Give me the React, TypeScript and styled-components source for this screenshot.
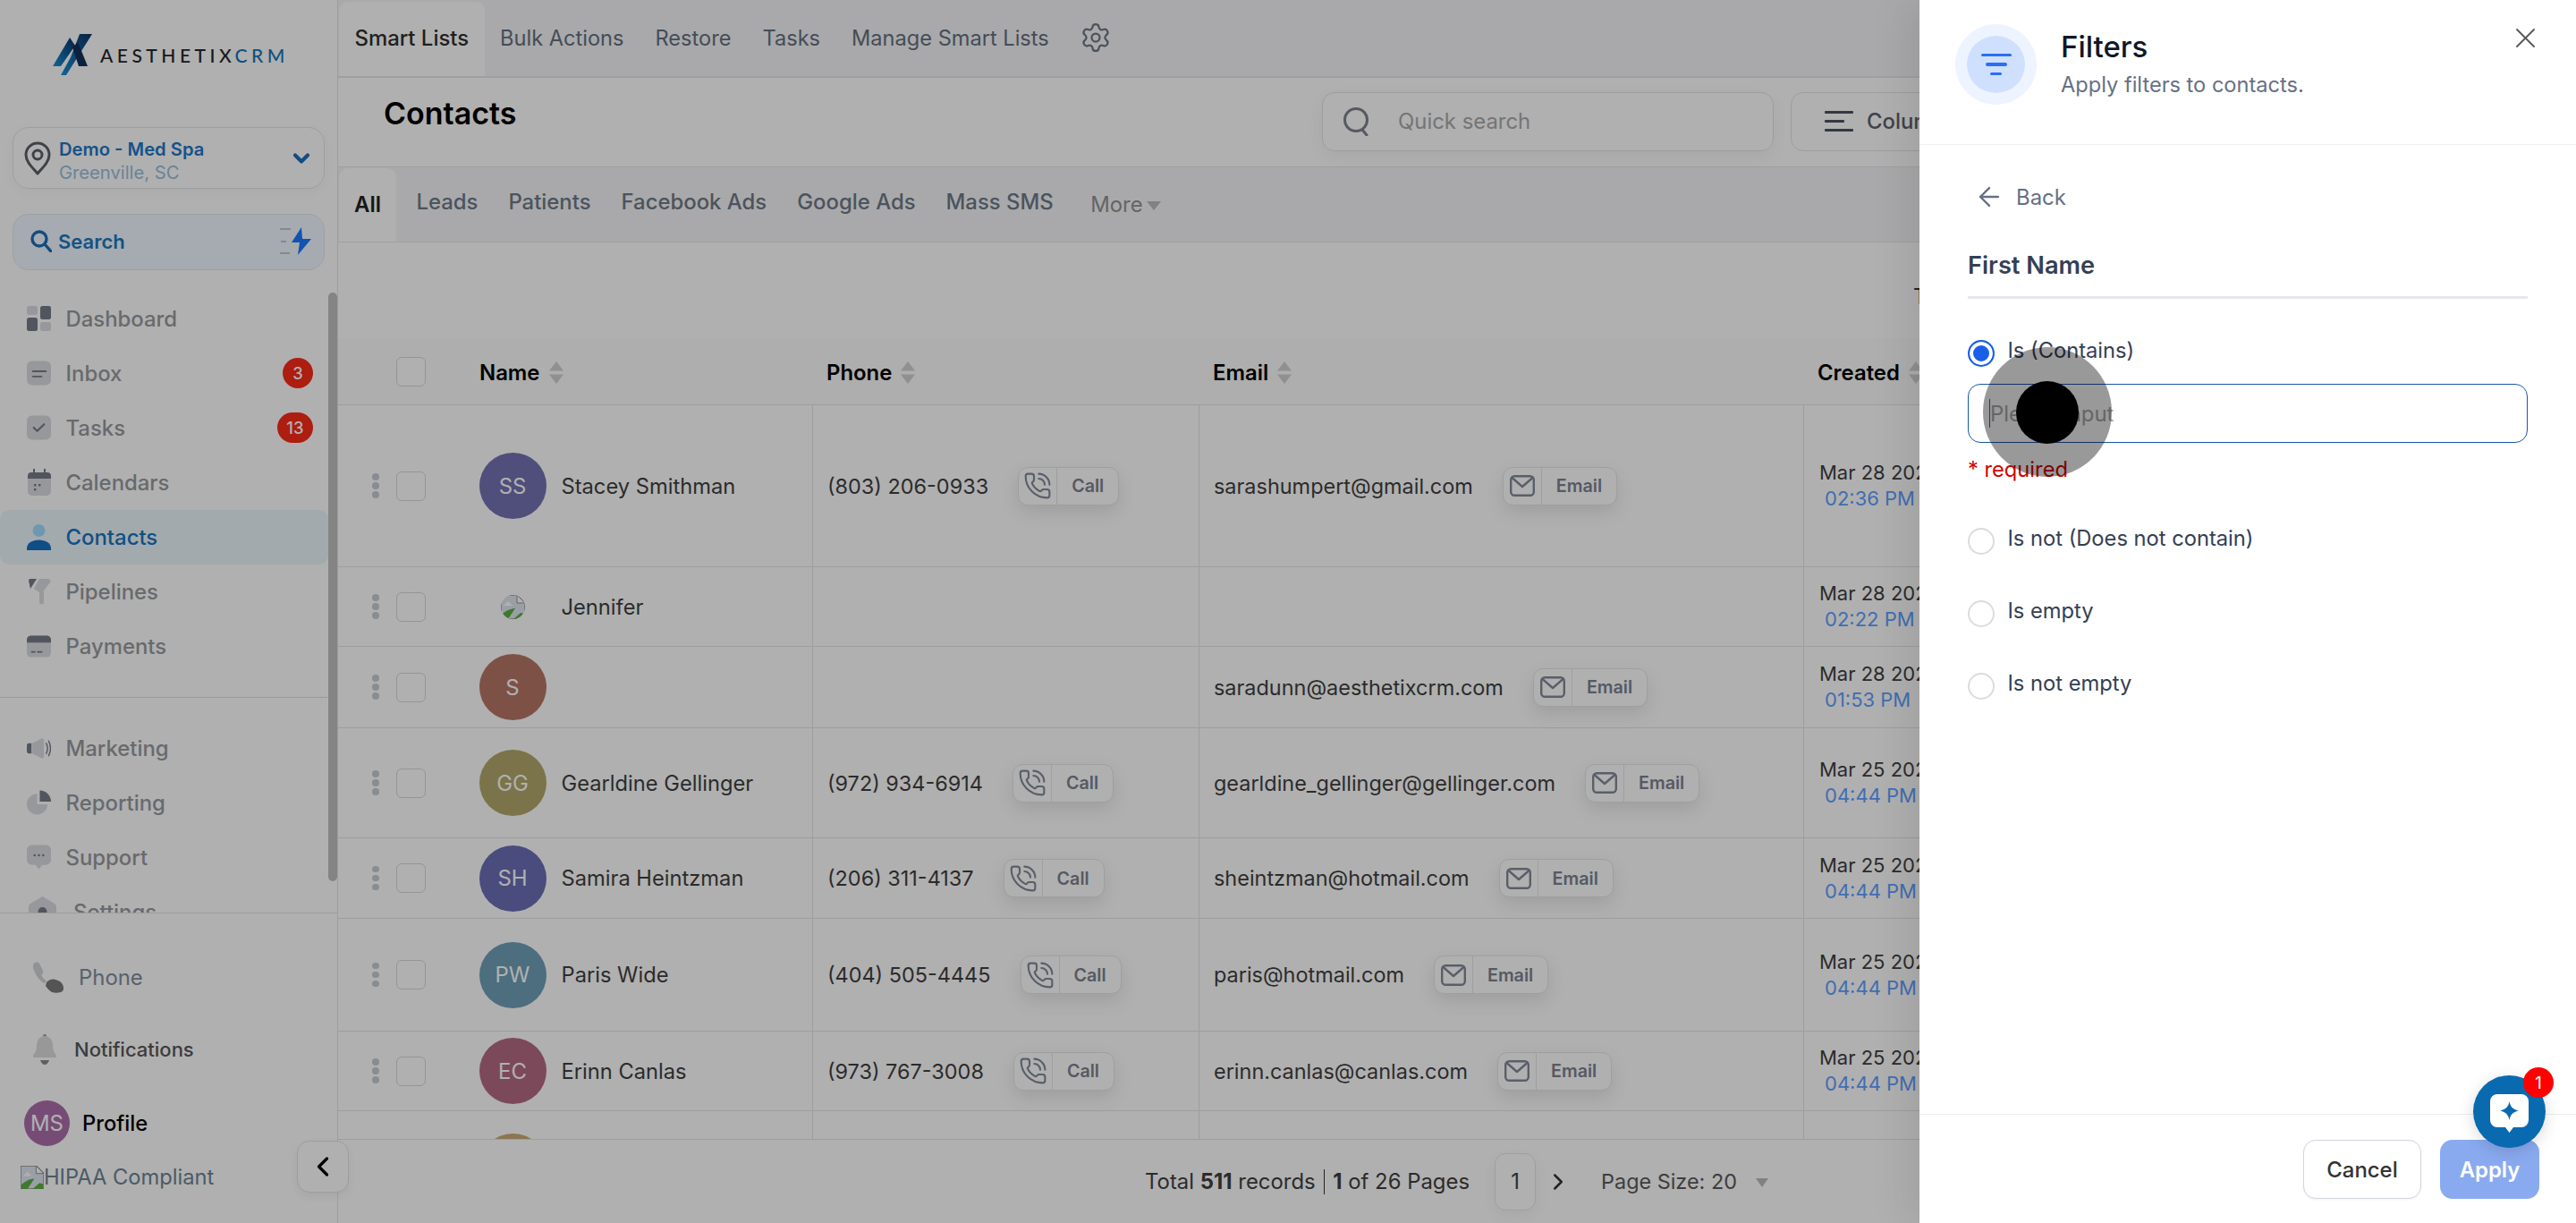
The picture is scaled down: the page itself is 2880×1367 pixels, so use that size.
import { ReactNode } from 'react';
import styled, { createGlobalStyle } from 'styled-components';
import { ArrowLeft, ChevronDown, ChevronLeft, ChevronRight, PhoneCall, Settings } from 'lucide-react';

const GlobalStyle = createGlobalStyle`
  html, body { margin: 0; padding: 0; background: #fff; }
  body { font-family: Inter, "Liberation Sans", sans-serif; font-size: 23.9px; color: #333; }
  * { box-sizing: border-box; }
`;

const DARK = '#747b88';
const LIGHT = '#d9dce2';

// ─── Drawn icons ──────────────────────────────────────────────────────────

function LogoMark() {
  return (
    <svg width="44" height="46" viewBox="0 0 44 46">
      <defs>
        <linearGradient id="logoFill" x1="0" y1="1" x2="1" y2="0">
          <stop offset="0" stopColor="#1f8fd8" />
          <stop offset="0.55" stopColor="#0f5c9a" />
          <stop offset="1" stopColor="#12305c" />
        </linearGradient>
      </defs>
      <polygon points="19,4 25,13 9,36 0,36" fill="url(#logoFill)" />
      <polygon points="30,0 44,0 15,46 9,46 20,26" fill="url(#logoFill)" />
      <polygon points="22,15 28,9 39,36 29,36" fill="#12305c" />
    </svg>
  );
}

function PinIcon() {
  return (
    <svg width="30" height="38" viewBox="0 0 30 38" fill="none" stroke="#5a6068" strokeWidth="3">
      <path d="M15 36C9 29 2 23 2 15a13 13 0 0 1 26 0c0 8-7 14-13 21z" strokeLinejoin="round" />
      <circle cx="15" cy="15" r="5" />
    </svg>
  );
}

function LightningIcon() {
  return (
    <svg width="36" height="32" viewBox="0 0 36 32">
      <g stroke="#8a96a3" strokeWidth="1">
        <line x1="0" y1="2" x2="12" y2="2" />
        <line x1="1" y1="16" x2="7" y2="16" />
        <line x1="0" y1="29" x2="11" y2="29" />
      </g>
      <path d="M24 0L13 17h9l-2 14L35 13h-10z" fill="#1b78ff" />
    </svg>
  );
}

function MagnifierIcon() {
  return (
    <svg width="24" height="25" viewBox="0 0 24 25" fill="none" stroke="#1e6fb8" strokeWidth="3.4">
      <circle cx="10" cy="10" r="8" />
      <line x1="16" y1="16" x2="23" y2="24" strokeLinecap="round" />
    </svg>
  );
}

const navIcons: Record<string, ReactNode> = {
  Dashboard: (
    <svg width="27" height="28" viewBox="0 0 27 28">
      <rect x="0" y="0" width="12" height="10" rx="2.5" fill={LIGHT} />
      <rect x="15" y="0" width="12" height="15" rx="2.5" fill={DARK} />
      <rect x="0" y="13" width="12" height="15" rx="2.5" fill={DARK} />
      <rect x="15" y="18" width="12" height="10" rx="2.5" fill={LIGHT} />
    </svg>
  ),
  Inbox: (
    <svg width="28" height="28" viewBox="0 0 28 28">
      <rect width="28" height="28" rx="6" fill={LIGHT} />
      <rect x="6" y="11" width="17" height="2" rx="1" fill={DARK} />
      <rect x="6" y="17" width="12" height="2" rx="1" fill={DARK} />
    </svg>
  ),
  Tasks: (
    <svg width="28" height="28" viewBox="0 0 28 28">
      <rect width="28" height="28" rx="6" fill={LIGHT} />
      <path d="M8 14l4 4 8-8" fill="none" stroke={DARK} strokeWidth="2.2" strokeLinecap="round" strokeLinejoin="round" />
    </svg>
  ),
  Calendars: (
    <svg width="26" height="30" viewBox="0 0 26 30">
      <rect x="0" y="8" width="26" height="22" rx="5" fill={LIGHT} />
      <path d="M0 11V8a4 4 0 0 1 4-4h2V0h2v4h10V0h2v4h2a4 4 0 0 1 4 4v3z" fill={DARK} />
      <g fill={DARK}>
        <rect x="7" y="17" width="2.4" height="2.4" />
        <rect x="12" y="17" width="2.4" height="2.4" />
        <rect x="7" y="22" width="2.4" height="2.4" />
      </g>
    </svg>
  ),
  Contacts: (
    <svg width="27" height="29" viewBox="0 0 27 29">
      <circle cx="13.5" cy="7" r="7" fill="#a1dcff" />
      <path d="M0 29v-2c0-6 6-9.500 13.500-9.500S27 21 27 27v2z" fill="#1672c0" />
    </svg>
  ),
  Pipelines: (
    <svg width="26" height="29" viewBox="0 0 26 29">
      <path d="M1 2a2 2 0 0 1 2-2h7L3 11z" fill={DARK} />
      <path d="M13 0h10a2.500 2.500 0 0 1 2 4l-7 9v13a2.500 2.500 0 0 1-5 0V15L7 11z" fill={LIGHT} />
    </svg>
  ),
  Payments: (
    <svg width="28" height="25" viewBox="0 0 28 25">
      <rect width="28" height="25" rx="5" fill={LIGHT} />
      <path d="M0 8V5a5 5 0 0 1 5-5h18a5 5 0 0 1 5 5v3z" fill={DARK} />
      <rect x="5" y="18" width="5" height="1.800" fill={DARK} />
      <rect x="12" y="18" width="6" height="1.800" fill={DARK} />
    </svg>
  ),
  Marketing: (
    <svg width="31" height="25" viewBox="0 0 31 25">
      <path d="M6 6H3a3 3 0 0 0-3 3v7a3 3 0 0 0 3 3h3z" fill={DARK} />
      <path d="M7 6l12-6c1.500-.5 3 .5 3 2v21c0 1.500-1.500 2.500-3 2L7 19z" fill={LIGHT} />
      <path d="M25 6c2 4 2 9 0 13M28 3c3 6 3 13 0 19" fill="none" stroke={DARK} strokeWidth="1.600" strokeLinecap="round" />
    </svg>
  ),
  Reporting: (
    <svg width="28" height="28" viewBox="0 0 28 28">
      <path d="M12 4a12 12 0 1 0 12 12H12z" fill={LIGHT} />
      <path d="M15 0a13 13 0 0 1 13 13H15z" fill={DARK} />
    </svg>
  ),
  Support: (
    <svg width="28" height="29" viewBox="0 0 28 29">
      <path d="M6 0h16a6 6 0 0 1 6 6v11a6 6 0 0 1-6 6h-4l-4 5-4-5H6a6 6 0 0 1-6-6V6a6 6 0 0 1 6-6z" fill={LIGHT} />
      <g fill={DARK}>
        <circle cx="9" cy="12" r="1.300" />
        <circle cx="14" cy="12" r="1.300" />
        <circle cx="19" cy="12" r="1.300" />
      </g>
    </svg>
  ),
  Settings: (
    <svg width="31" height="34" viewBox="0 0 31 34">
      <path d="M15.500 0l13.500 8a4 4 0 0 1 2 3.500v11a4 4 0 0 1-2 3.500l-13.500 8L2 26a4 4 0 0 1-2-3.500v-11A4 4 0 0 1 2 8z" fill={LIGHT} />
      <circle cx="15.500" cy="17" r="5" fill={DARK} />
    </svg>
  ),
};

function HandsetIcon() {
  return (
    <svg width="34" height="35" viewBox="0 0 34 35">
      <path d="M1 2c2-2 5-2 6 0l4 8c.5 1.500 0 3-1 4-1 1 0 2 1 4l4 4-3 2C6 20 2 13 0 7c-.5-2 0-4 1-5z" fill="#d2d4d8" />
      <path d="M15 23c1-1 3-3 5-3 3-1 6 0 10 2 3 2 4 5 4 8 0 2-1 3-3 4-3 1-7 1-10 0-3-2-5-4-7-7z" fill="#7a7a7a" />
    </svg>
  );
}

function BellIcon() {
  return (
    <svg width="26" height="34" viewBox="0 0 26 34">
      <rect x="11" y="0" width="4" height="4" rx="2" fill="#9a9a9a" />
      <path d="M13 2c6 0 9 5 9 11 0 5 2 8 4 11 .5 1 0 2-1 2H1c-1 0-1.500-1-1-2 2-3 4-6 4-11C4 7 7 2 13 2z" fill="#dcdcdc" />
      <path d="M8 29h10c-1 3-3 5-5 5s-4-2-5-5z" fill="#8a8a8a" />
    </svg>
  );
}

function BrokenImage({ size }: { size: number }) {
  return (
    <svg width={size} height={size} viewBox="0 0 27 27">
      <path d="M0 0h18l9 9v18H0z" fill="#dfe7f2" stroke="#8f8f8f" strokeWidth="1.500" />
      <path d="M18 0v9h9z" fill="#ffffff" stroke="#8f8f8f" strokeWidth="1" />
      <path d="M3 12l5-5 5 5z" fill="#ffffff" />
      <path d="M1 27v-5c5-5 11-7 15-7l-8 12z" fill="#5cb040" />
      <path d="M14 27l8-7 4 1v6z" fill="#5cb040" />
    </svg>
  );
}

function SortIcon() {
  return (
    <svg width="18" height="25" viewBox="0 0 18 25" fill="#cfd1d0">
      <path d="M9 0l8 10.500H1z" />
      <path d="M9 25l8-10.500H1z" />
    </svg>
  );
}

function QuickSearchIcon() {
  return (
    <svg width="32" height="32" viewBox="0 0 32 32" fill="none" stroke="#7d838c" strokeWidth="3">
      <circle cx="15" cy="14" r="12.500" />
      <line x1="22" y1="25" x2="27" y2="31" strokeLinecap="round" />
    </svg>
  );
}

function ColumnsIcon() {
  return (
    <svg width="32" height="23" viewBox="0 0 32 23" fill="#4a5160">
      <rect x="0" y="0" width="32" height="3" rx="1" />
      <rect x="0" y="10" width="22" height="3" rx="1" />
      <rect x="0" y="20" width="32" height="3" rx="1" />
    </svg>
  );
}

function EnvelopeIcon() {
  return (
    <svg width="28" height="24" viewBox="0 0 28 24" fill="none" stroke="#828a99" strokeWidth="2.400" strokeLinejoin="round" strokeLinecap="round">
      <rect x="1.200" y="1.200" width="25.600" height="21.600" rx="4" />
      <path d="M2.500 3l11.500 10L25.500 3" />
    </svg>
  );
}

function CloseIcon() {
  return (
    <svg width="21" height="21" viewBox="0 0 21 21" stroke="#555" strokeWidth="1.800" strokeLinecap="round">
      <line x1="1" y1="1" x2="20" y2="20" />
      <line x1="20" y1="1" x2="1" y2="20" />
    </svg>
  );
}

function ChatIcon() {
  return (
    <svg width="43" height="44" viewBox="0 0 43 44">
      <path d="M8 0h27a8 8 0 0 1 8 8v21a8 8 0 0 1-8 8h-9l-4.500 6-4.500-6H8a8 8 0 0 1-8-8V8a8 8 0 0 1 8-8z" fill="#fff" />
      <path d="M21.500 8c1 6 4 9 10 10.500-6 1.500-9 4.500-10 10.500-1-6-4-9-10-10.500 6-1.500 9-4.500 10-10.500z" fill="#0a6ab0" />
    </svg>
  );
}

// ─── Data ─────────────────────────────────────────────────────────────────

type NavEntry = { label: string; badge?: string };

const primaryNav: NavEntry[] = [
  { label: 'Dashboard' },
  { label: 'Inbox', badge: '3' },
  { label: 'Tasks', badge: '13' },
  { label: 'Calendars' },
  { label: 'Contacts' },
  { label: 'Pipelines' },
  { label: 'Payments' },
];

const secondaryNav: NavEntry[] = [{ label: 'Marketing' }, { label: 'Reporting' }, { label: 'Support' }, { label: 'Settings' }];

type Contact = {
  id: string;
  initials?: string;
  color?: string;
  name?: string;
  phone?: string;
  email?: string;
  date?: string;
  time?: string;
  height: number;
};

const contacts: Contact[] = [
  { id: 'ss', initials: 'SS', color: '#7471b3', name: 'Stacey Smithman', phone: '(803) 206-0933', email: 'sarashumpert@gmail.com', date: 'Mar 28 2025', time: '02:36 PM', height: 181 },
  { id: 'j', name: 'Jennifer', date: 'Mar 28 2025', time: '02:22 PM', height: 89 },
  { id: 's', initials: 'S', color: '#b77668', email: 'saradunn@aesthetixcrm.com', date: 'Mar 28 2025', time: '01:53 PM', height: 91 },
  { id: 'gg', initials: 'GG', color: '#b2a86c', name: 'Gearldine Gellinger', phone: '(972) 934-6914', email: 'gearldine_gellinger@gellinger.com', date: 'Mar 25 2025', time: '04:44 PM', height: 123 },
  { id: 'sh', initials: 'SH', color: '#6b6eb6', name: 'Samira Heintzman', phone: '(206) 311-4137', email: 'sheintzman@hotmail.com', date: 'Mar 25 2025', time: '04:44 PM', height: 90 },
  { id: 'pw', initials: 'PW', color: '#6fa0b8', name: 'Paris Wide', phone: '(404) 505-4445', email: 'paris@hotmail.com', date: 'Mar 25 2025', time: '04:44 PM', height: 126 },
  { id: 'ec', initials: 'EC', color: '#b46b85', name: 'Erinn Canlas', phone: '(973) 767-3008', email: 'erinn.canlas@canlas.com', date: 'Mar 25 2025', time: '04:44 PM', height: 89 },
  { id: 'next', initials: '', color: '#c8ac76', height: 124 },
];

// ─── Page ─────────────────────────────────────────────────────────────────

export default function App() {
  return (
    <Page>
      <GlobalStyle />
      <Sidebar>
        <SideScroll>
          <LogoRow>
            <LogoMark />
            <LogoText>AESTHETIX<LogoAccent>CRM</LogoAccent></LogoText>
          </LogoRow>
          <LocationCard>
            <PinIcon />
            <LocationText>
              <LocationName>Demo - Med Spa</LocationName>
              <LocationCity>Greenville, SC</LocationCity>
            </LocationText>
            <ChevronDown size={28} strokeWidth={3.6} color="#1e6fb8" />
          </LocationCard>
          <SearchCard>
            <MagnifierIcon />
            <SearchLabel>Search</SearchLabel>
            <LightningIcon />
          </SearchCard>
          <NavList>
            {primaryNav.map((item) => (
              <NavRow key={item.label} $active={item.label === 'Contacts'}>
                <NavIconSlot>{navIcons[item.label]}</NavIconSlot>
                <NavLabel>{item.label}</NavLabel>
                {item.badge && <Badge>{item.badge}</Badge>}
              </NavRow>
            ))}
          </NavList>
          <NavDivider />
          <NavList>
            {secondaryNav.map((item) => (
              <NavRow key={item.label} $wide={item.label === 'Settings'}>
                <NavIconSlot $wide={item.label === 'Settings'}>{navIcons[item.label]}</NavIconSlot>
                <NavLabel>{item.label}</NavLabel>
              </NavRow>
            ))}
          </NavList>
          <ScrollThumb />
        </SideScroll>
        <SideBottom>
          <BottomRow $top={49} $left={37} $gap={17} $height={44}>
            <HandsetIcon />
            <PhoneLabel>Phone</PhoneLabel>
          </BottomRow>
          <BottomRow $top={37} $left={37} $gap={20} $height={44}>
            <BellIcon />
            <NotifyLabel>Notifications</NotifyLabel>
          </BottomRow>
          <BottomRow $top={34} $left={27} $gap={14} $height={52}>
            <ProfileAvatar>MS</ProfileAvatar>
            <ProfileLabel>Profile</ProfileLabel>
          </BottomRow>
          <BottomRow $top={20} $left={23} $gap={0} $height={28}>
            <BrokenImage size={26} />
            <HipaaLabel>HIPAA Compliant</HipaaLabel>
          </BottomRow>
        </SideBottom>
        <CollapseButton>
          <ChevronLeft size={36} strokeWidth={2.2} color="#000" />
        </CollapseButton>
      </Sidebar>

      <Main>
        <TopTabs>
          <TopTab $active>Smart Lists</TopTab>
          <TopTab>Bulk Actions</TopTab>
          <TopTab>Restore</TopTab>
          <TopTab>Tasks</TopTab>
          <TopTab>Manage Smart Lists</TopTab>
          <GearSlot>
            <Settings size={36} strokeWidth={1.5} color="#6f7783" />
          </GearSlot>
        </TopTabs>

        <TitleBar>
          <PageTitle>Contacts</PageTitle>
          <TitleActions>
            <QuickSearch>
              <QuickSearchIcon />
              <QuickPlaceholder>Quick search</QuickPlaceholder>
            </QuickSearch>
            <ColumnsButton>
              <ColumnsIcon />
              Columns
            </ColumnsButton>
          </TitleActions>
        </TitleBar>

        <ListTabs>
          <ListTabActive>All</ListTabActive>
          <ListTab>Leads</ListTab>
          <ListTab>Patients</ListTab>
          <ListTab>Facebook Ads</ListTab>
          <ListTab>Google Ads</ListTab>
          <ListTab>Mass SMS</ListTab>
          <MoreTab>More<MoreCaret /></MoreTab>
        </ListTabs>

        <InfoRow>Total 511 records</InfoRow>

        <Table>
          <HeadRow>
            <HeadFirst>
              <CheckBox />
              <HeadLabel>Name</HeadLabel>
              <SortIcon />
            </HeadFirst>
            <HeadCell>
              <HeadLabel>Phone</HeadLabel>
              <SortIcon />
            </HeadCell>
            <HeadCell>
              <HeadLabel>Email</HeadLabel>
              <SortIcon />
            </HeadCell>
            <HeadCell>
              <HeadLabel>Created</HeadLabel>
              <SortIcon />
            </HeadCell>
          </HeadRow>
          {contacts.map((c) => (
            <BodyRow key={c.id} $height={c.height}>
              <NameCell>
                <Kebab>
                  <KebabDot />
                  <KebabDot />
                  <KebabDot />
                </Kebab>
                <CheckBox />
                <Avatar $color={c.color}>{c.initials ?? <BrokenImage size={27} />}</Avatar>
                {c.name && <NameText>{c.name}</NameText>}
              </NameCell>
              <DataCell>
                {c.phone && (
                  <>
                    <CellText>{c.phone}</CellText>
                    <ActionButton>
                      <ActionIcon>
                        <PhoneCall size={32} strokeWidth={1.6} color="#828a99" />
                      </ActionIcon>
                      <ActionLabel>Call</ActionLabel>
                    </ActionButton>
                  </>
                )}
              </DataCell>
              <DataCell>
                {c.email && (
                  <>
                    <CellText>{c.email}</CellText>
                    <ActionButton>
                      <ActionIcon>
                        <EnvelopeIcon />
                      </ActionIcon>
                      <ActionLabel>Email</ActionLabel>
                    </ActionButton>
                  </>
                )}
              </DataCell>
              <DateCell>
                {c.date && <DateText>{c.date}</DateText>}
                {c.time && <TimeText>{c.time}</TimeText>}
              </DateCell>
            </BodyRow>
          ))}
        </Table>

        <Pagination>
          <TotalText>Total <b>511</b> records</TotalText>
          <TotalRule />
          <TotalText><b>1</b> of 26 Pages</TotalText>
          <PageBox>1</PageBox>
          <ChevronRight size={30} strokeWidth={2} color="#333" />
          <PageSize>Page Size: 20</PageSize>
          <PageCaret />
        </Pagination>
      </Main>

      <Scrim />

      <Drawer>
        <DrawerHead>
          <FilterBadge>
            <FilterInner>
              <FilterLine $w={34} />
              <FilterLine $w={24} />
              <FilterLine $w={13} />
            </FilterInner>
          </FilterBadge>
          <DrawerTitles>
            <DrawerTitle>Filters</DrawerTitle>
            <DrawerSub>Apply filters to contacts.</DrawerSub>
          </DrawerTitles>
          <CloseSlot>
            <CloseIcon />
          </CloseSlot>
        </DrawerHead>

        <DrawerBody>
          <BackRow>
            <ArrowLeft size={34} strokeWidth={1.7} color="#667085" />
            <BackLabel>Back</BackLabel>
          </BackRow>
          <FieldTitle>First Name</FieldTitle>
          <OptionRow $top={38}>
            <Radio $on />
            <OptionLabel>Is (Contains)</OptionLabel>
          </OptionRow>
          <InputWrap>
            <TextInput placeholder="Please input" readOnly />
            <Caret />
          </InputWrap>
          <RequiredNote>* required</RequiredNote>
          <OptionRow $top={42}>
            <Radio />
            <OptionLabel>Is not (Does not contain)</OptionLabel>
          </OptionRow>
          <OptionRow $top={41}>
            <Radio />
            <OptionLabel>Is empty</OptionLabel>
          </OptionRow>
          <OptionRow $top={41}>
            <Radio />
            <OptionLabel>Is not empty</OptionLabel>
          </OptionRow>
        </DrawerBody>

        <DrawerFoot>
          <CancelButton>Cancel</CancelButton>
          <ApplyButton>Apply</ApplyButton>
        </DrawerFoot>

        <ClickHalo>
          <ClickDot />
        </ClickHalo>
        <ChatBubble>
          <ChatIcon />
          <ChatBadge>1</ChatBadge>
        </ChatBubble>
      </Drawer>
    </Page>
  );
}

// ─── Shell ────────────────────────────────────────────────────────────────

const Page = styled.div`
  position: relative;
  display: flex;
  width: 2880px;
  height: 1367px;
  overflow: hidden;
  background: #fff;
`;

const Scrim = styled.div`
  position: absolute;
  inset: 0;
  z-index: 10;
  background: rgba(0, 0, 0, 0.31);
`;

// ─── Sidebar ──────────────────────────────────────────────────────────────

const Sidebar = styled.aside`
  position: relative;
  z-index: 2;
  flex: 0 0 378px;
  display: flex;
  flex-direction: column;
  border-right: 1px solid #e4e4e4;
  background: #fff;
`;

const SideScroll = styled.div`
  position: relative;
  flex: 0 0 1020px;
  overflow: hidden;
`;

const ScrollThumb = styled.div`
  position: absolute;
  top: 327px;
  right: 0;
  width: 10px;
  height: 658px;
  border-radius: 5px;
  background: #c0c0c0;
`;

const LogoRow = styled.div`
  display: flex;
  align-items: center;
  gap: 9px;
  height: 142px;
  padding: 0 0 20px 59px;
`;

const LogoText = styled.span`
  font-family: Lato, sans-serif;
  font-size: 21px;
  font-weight: 500;
  letter-spacing: 4.5px;
  color: #22262c;
`;

const LogoAccent = styled.span`
  color: #1578b8;
`;

const LocationCard = styled.div`
  display: flex;
  align-items: center;
  height: 69px;
  margin: 0 14px;
  padding: 0 11px 0 12px;
  border: 1px solid #e3e5e8;
  border-radius: 18px;
  box-shadow: 0 4px 14px rgba(0, 0, 0, 0.03);
`;

const LocationText = styled.div`
  flex: 1;
  display: flex;
  flex-direction: column;
  margin: 7px 0 0 9px;
  line-height: 26px;
`;

const LocationName = styled.span`
  font-size: 20.2px;
  font-weight: 600;
  color: #1e78c8;
`;

const LocationCity = styled.span`
  font-size: 20.2px;
  color: #97c0e0;
`;

const SearchCard = styled.div`
  display: flex;
  align-items: center;
  height: 63px;
  margin: 28px 14px 0;
  padding: 0 13px 2px 19px;
  border: 1px solid #e3e8ee;
  border-radius: 18px;
  background: #f0f8ff;
`;

const SearchLabel = styled.span`
  flex: 1;
  margin-left: 7px;
  font-size: 22px;
  font-weight: 600;
  color: #1e78c0;
`;

const NavList = styled.div`
  display: flex;
  flex-direction: column;
  margin-top: 23.500px;
`;

const NavRow = styled.div<{ $active?: boolean; $wide?: boolean }>`
  display: flex;
  align-items: center;
  gap: ${({ $wide }) => ($wide ? '19px' : '16.500px')};
  flex: 0 0 61px;
  height: 61px;
  width: 367px;
  padding: 0 17px 0 ${({ $wide }) => ($wide ? '32px' : '30px')};
  border-radius: 10px;
  font-weight: 500;
  color: ${({ $active }) => ($active ? '#1674c2' : '#979a9f')};
  background: ${({ $active }) => ($active ? '#ecf7fc' : 'transparent')};
`;

const NavIconSlot = styled.span<{ $wide?: boolean }>`
  display: flex;
  justify-content: center;
  width: ${({ $wide }) => ($wide ? '31px' : '27px')};
`;

const NavLabel = styled.span`
  flex: 1;
  font-size: 23.9px;
`;

const Badge = styled.span`
  min-width: 34px;
  height: 34px;
  padding: 0 10.500px;
  border-radius: 17px;
  background: #fb2a18;
  color: #fff;
  font-size: 18.400px;
  font-weight: 500;
  line-height: 34px;
  text-align: center;
`;

const NavDivider = styled.div`
  height: 1px;
  margin: 26.500px 11px 0 0;
  background: #dfdfdf;
  & + div {
    margin-top: 25.500px;
  }
`;

const SideBottom = styled.div`
  flex: 1;
  display: flex;
  flex-direction: column;
  border-top: 1px solid #e4e4e4;
`;

const BottomRow = styled.div<{ $top: number; $left: number; $gap: number; $height: number }>`
  display: flex;
  align-items: center;
  flex: 0 0 ${({ $height }) => $height}px;
  margin-top: ${({ $top }) => $top}px;
  padding-left: ${({ $left }) => $left}px;
  gap: ${({ $gap }) => $gap}px;
`;

const PhoneLabel = styled.span`
  font-size: 23.9px;
  color: #818e9f;
`;

const NotifyLabel = styled.span`
  font-size: 22px;
  font-weight: 500;
  color: #575757;
`;

const ProfileAvatar = styled.span`
  display: flex;
  align-items: center;
  justify-content: center;
  width: 51px;
  height: 51px;
  border-radius: 50%;
  background: #ac6fac;
  color: #fff;
  font-size: 23.9px;
`;

const ProfileLabel = styled.span`
  font-size: 23.7px;
  font-weight: 500;
  color: #000;
`;

const HipaaLabel = styled.span`
  font-size: 23.7px;
  color: #6d8494;
`;

const CollapseButton = styled.button`
  position: absolute;
  left: 332px;
  top: 1275px;
  display: flex;
  align-items: center;
  justify-content: center;
  width: 58px;
  height: 58px;
  padding: 0;
  border: 1px solid #e4e4e4;
  border-radius: 14px;
  background: #fff;
  box-shadow: 0 4px 10px rgba(0, 0, 0, 0.06);
`;

// ─── Main column ──────────────────────────────────────────────────────────

const Main = styled.main`
  flex: 1;
  display: flex;
  flex-direction: column;
  min-width: 0;
  overflow: hidden;
`;

const TopTabs = styled.nav`
  flex: 0 0 87px;
  display: flex;
  align-items: flex-end;
  padding: 2px 0 0 1px;
  border-bottom: 2px solid #e6e6ea;
  background: #f5f5f8;
`;

const TopTab = styled.div<{ $active?: boolean }>`
  display: flex;
  align-items: center;
  height: 83px;
  padding: 0 17.500px 3px;
  border-radius: 10px 10px 0 0;
  font-size: ${({ $active }) => ($active ? '23.9px' : '23.6px')};
  font-weight: ${({ $active }) => ($active ? 500 : 400)};
  color: ${({ $active }) => ($active ? '#2f2f2f' : '#64707e')};
  background: ${({ $active }) => ($active ? '#fff' : 'transparent')};
`;

const GearSlot = styled.span`
  display: flex;
  align-items: center;
  height: 83px;
  margin-left: 17px;
  padding-bottom: 3px;
`;

const TitleBar = styled.div`
  flex: 0 0 100px;
  display: flex;
  align-items: center;
  justify-content: space-between;
  padding: 0 678px 4px 51px;
  border-bottom: 1px solid #e6e6e6;
  background: #fff;
`;

const PageTitle = styled.h1`
  margin: 0 0 16px;
  font-size: 34px;
  font-weight: 600;
  color: #000;
`;

const TitleActions = styled.div`
  display: flex;
  gap: 19px;
  margin-top: 2px;
`;

const QuickSearch = styled.div`
  display: flex;
  align-items: center;
  gap: 30px;
  width: 505px;
  height: 66px;
  padding-left: 22px;
  border: 1px solid #e4e4e4;
  border-radius: 14px;
  box-shadow: 0 6px 18px rgba(0, 0, 0, 0.05);
`;

const QuickPlaceholder = styled.span`
  color: #aaa;
`;

const ColumnsButton = styled.div`
  display: flex;
  align-items: center;
  gap: 15px;
  width: 200px;
  height: 66px;
  padding-left: 37px;
  border: 1px solid #e4e4e4;
  border-radius: 14px;
  font-weight: 500;
  color: #5a6270;
`;

const ListTabs = styled.nav`
  flex: 0 0 84px;
  display: flex;
  align-items: flex-end;
  padding: 1px 0 0 1px;
  border-bottom: 1px solid #e6e6ea;
  background: #f5f5f8;
`;

const ListTabActive = styled.div`
  display: flex;
  align-items: center;
  height: 82px;
  margin-right: 5.500px;
  padding: 0 17px 2px;
  border-radius: 10px 10px 0 0;
  background: #fff;
  font-weight: 600;
  color: #222;
`;

const ListTab = styled.div`
  display: flex;
  align-items: center;
  height: 82px;
  padding: 0 17px 7px;
  font-weight: 500;
  color: #6d7a88;
`;

const MoreTab = styled.div`
  display: flex;
  align-items: center;
  height: 82px;
  margin-left: 24.500px;
  padding-bottom: 2px;
  color: #929292;
`;

const MoreCaret = styled.span`
  width: 0;
  height: 0;
  margin: 3px 0 0 4px;
  border-style: solid;
  border-width: 10px 8px 0;
  border-color: #bbb transparent transparent;
`;

const InfoRow = styled.div`
  flex: 0 0 107px;
  display: flex;
  align-items: center;
  padding: 13px 0 0 1761px;
  white-space: nowrap;
  color: #333;
`;

const Table = styled.div`
  flex: 1;
  min-height: 0;
  overflow: hidden;
`;

const COLUMNS = '530px 432px 676px 1fr';

const HeadRow = styled.div`
  display: grid;
  grid-template-columns: ${COLUMNS};
  height: 75px;
  padding-top: 2px;
  border-bottom: 1px solid #e4e4e4;
  background: #fbfdfb;
`;

const HeadCell = styled.div`
  display: flex;
  align-items: center;
  gap: 9px;
  padding-left: 16px;
`;

const HeadFirst = styled(HeadCell)`
  padding-left: 65px;
  & > span:first-child {
    margin: -2px 51px 0 0;
  }
`;

const HeadLabel = styled.span`
  font-weight: 600;
  color: #000;
`;

const CheckBox = styled.span`
  flex: none;
  width: 33px;
  height: 33px;
  border: 1px solid #d8d8d8;
  border-radius: 6px;
  background: #fff;
`;

const BodyRow = styled.div<{ $height: number }>`
  display: grid;
  grid-template-columns: ${COLUMNS};
  height: ${({ $height }) => $height}px;
  border-bottom: 1px solid #e4e4e4;
`;

const NameCell = styled.div`
  display: flex;
  align-items: center;
  padding-left: 38px;
  overflow: hidden;
`;

const Kebab = styled.span`
  flex: none;
  display: flex;
  flex-direction: column;
  gap: 2.500px;
  margin-right: 19px;
`;

const KebabDot = styled.span`
  width: 8px;
  height: 7.500px;
  border-radius: 50%;
  background: #c4ccd4;
`;

const Avatar = styled.span<{ $color?: string }>`
  flex: none;
  display: flex;
  align-items: center;
  justify-content: center;
  width: 75px;
  height: 74px;
  margin: 0 17px 0 59.500px;
  border-radius: 50%;
  background: ${({ $color }) => $color ?? 'transparent'};
  color: #fff;
  font-size: 23.9px;

  svg {
    border-radius: 50%;
  }
`;

const NameText = styled.span`
  font-size: 23.7px;
  color: #3f3f3f;
`;

const DataCell = styled.div`
  display: flex;
  align-items: center;
  gap: 33px;
  padding-left: 16px;
  border-left: 1px solid #e4e4e4;
`;

const CellText = styled.span`
  font-size: 23.45px;
  color: #3f3f3f;
  white-space: nowrap;
`;

const ActionButton = styled.span`
  flex: none;
  display: flex;
  align-items: stretch;
  height: 43px;
  border: 1px solid #e6e6e6;
  border-radius: 11px;
  background: #fff;
  box-shadow: 0 8px 20px rgba(0, 0, 0, 0.1);
`;

const ActionIcon = styled.span`
  display: flex;
  align-items: center;
  justify-content: center;
  width: 43px;
  border-right: 1px solid #e6e6e6;
`;

const ActionLabel = styled.span`
  display: flex;
  align-items: center;
  padding: 0 16px;
  font-size: 19.700px;
  font-weight: 600;
  color: #7c8391;
`;

const DateCell = styled.div`
  display: flex;
  flex-direction: column;
  justify-content: center;
  padding-left: 17px;
  border-left: 1px solid #e4e4e4;
  font-size: 22px;
  line-height: 29px;
  white-space: nowrap;
`;

const DateText = styled.span`
  color: #3f3f3f;
`;

const TimeText = styled.span`
  margin-left: 6px;
  color: #5ea0ff;
`;

const Pagination = styled.footer`
  flex: 0 0 94px;
  display: flex;
  align-items: center;
  padding: 0 0 0 902px;
  border-top: 1px solid #e4e4e4;
  background: #fff;
`;

const TotalText = styled.span`
  color: #3f3f3f;
  white-space: nowrap;

  b {
    font-weight: 700;
  }
`;

const TotalRule = styled.span`
  width: 1.500px;
  height: 28px;
  margin: 0 9px;
  background: #333;
`;

const PageBox = styled.span`
  display: flex;
  align-items: center;
  justify-content: center;
  width: 46px;
  height: 64px;
  margin: 0 10px 0 28px;
  border: 1px solid #e6e6e6;
  border-radius: 12px;
  box-shadow: 0 6px 16px rgba(0, 0, 0, 0.05);
  color: #3f3f3f;
`;

const PageSize = styled.span`
  margin-left: 33px;
  font-size: 23.400px;
  color: #5a5a5a;
  white-space: nowrap;
`;

const PageCaret = styled.span`
  width: 0;
  height: 0;
  margin: 3px 0 0 21px;
  border-style: solid;
  border-width: 10px 7.500px 0;
  border-color: #bbb transparent transparent;
`;

// ─── Filter drawer ────────────────────────────────────────────────────────

const Drawer = styled.section`
  position: absolute;
  top: 0;
  right: 0;
  bottom: 0;
  z-index: 20;
  display: flex;
  flex-direction: column;
  width: 734px;
  background: #fff;
  box-shadow: -14px 0 40px rgba(0, 0, 0, 0.09);
`;

const DrawerHead = styled.header`
  flex: 0 0 162px;
  display: flex;
  align-items: flex-start;
  padding: 27px 46px 0 40px;
  border-bottom: 1px solid #eeeeee;
`;

const FilterBadge = styled.span`
  flex: none;
  display: flex;
  align-items: center;
  justify-content: center;
  width: 91px;
  height: 90px;
  border-radius: 50%;
  background: #eef4ff;
`;

const FilterInner = styled.span`
  display: flex;
  flex-direction: column;
  align-items: center;
  justify-content: center;
  gap: 7px;
  width: 65px;
  height: 64px;
  border-radius: 50%;
  background: #cfe0ff;
`;

const FilterLine = styled.span<{ $w: number }>`
  width: ${({ $w }) => $w}px;
  height: 3.500px;
  border-radius: 2px;
  background: #2b6ff3;
`;

const DrawerTitles = styled.div`
  flex: 1;
  display: flex;
  flex-direction: column;
  margin: 5px 0 0 27px;
`;

const DrawerTitle = styled.h2`
  margin: 0;
  font-size: 33px;
  font-weight: 500;
  line-height: 40px;
  color: #111827;
`;

const DrawerSub = styled.p`
  margin: 3px 0 0;
  font-size: 23.6px;
  line-height: 40px;
  color: #667085;
`;

const CloseSlot = styled.span`
  display: flex;
  margin-top: 5px;
`;

const DrawerBody = styled.div`
  flex: 1;
  display: flex;
  flex-direction: column;
  padding: 38px 54px 0;
`;

const BackRow = styled.div`
  display: flex;
  align-items: center;
  gap: 13px;
  height: 40px;
  padding-left: 7px;
`;

const BackLabel = styled.span`
  color: #667085;
`;

const FieldTitle = styled.h3`
  margin: 37px 0 0;
  padding-bottom: 14px;
  border-bottom: 3px solid #e5e7eb;
  font-size: 27.200px;
  font-weight: 600;
  line-height: 40px;
  color: #344054;
`;

const OptionRow = styled.div<{ $top: number }>`
  display: flex;
  gap: 14.500px;
  height: 40px;
  margin-top: ${({ $top }) => $top}px;
`;

const Radio = styled.span<{ $on?: boolean }>`
  flex: none;
  width: 30px;
  height: 30px;
  margin-top: 8px;
  border-radius: 50%;
  border: 2px solid ${({ $on }) => ($on ? '#1a5fe8' : '#dcdcdc')};
  background: ${({ $on }) => ($on ? '#1a5fe8' : '#fff')};
  box-shadow: ${({ $on }) => ($on ? 'inset 0 0 0 4px #fff' : 'none')};
`;

const OptionLabel = styled.span`
  font-size: 23.7px;
  line-height: 40px;
  color: #344054;
`;

const InputWrap = styled.div`
  position: relative;
  height: 66px;
  margin-top: 17px;
`;

const TextInput = styled.input`
  display: block;
  width: 100%;
  height: 100%;
  padding: 0 24px;
  border: 1px solid #1a55b0;
  border-radius: 14px;
  outline: none;
  font: inherit;
  color: #333;

  &::placeholder {
    color: #a8a8a8;
  }
`;

const Caret = styled.span`
  position: absolute;
  left: 24px;
  top: 17px;
  width: 1px;
  height: 32px;
  background: #2a66b0;
`;

const RequiredNote = styled.div`
  margin-top: 15px;
  font-size: 23.700px;
  line-height: 30px;
  color: #d40000;
`;

const DrawerFoot = styled.footer`
  flex: 0 0 122px;
  display: flex;
  justify-content: flex-end;
  gap: 21px;
  padding: 28px 41px 0 0;
  border-top: 1px solid #eeeeee;
`;

const CancelButton = styled.button`
  width: 132px;
  height: 66px;
  padding: 0;
  border: 1px solid #d0d5dd;
  border-radius: 14px;
  background: #fff;
  box-shadow: 0 1px 3px rgba(0, 0, 0, 0.05);
  font: inherit;
  font-weight: 500;
  color: #333;
`;

const ApplyButton = styled.button`
  width: 111px;
  height: 66px;
  padding: 0;
  border: none;
  border-radius: 14px;
  background: #8aaaf0;
  font: inherit;
  font-weight: 600;
  color: #fff;
`;

const ClickHalo = styled.div`
  position: absolute;
  left: 70.500px;
  top: 388px;
  display: flex;
  align-items: center;
  justify-content: center;
  width: 144px;
  height: 145px;
  border-radius: 50%;
  background: rgba(0, 0, 0, 0.4);
`;

const ClickDot = styled.span`
  width: 70px;
  height: 70px;
  border-radius: 50%;
  background: #000;
`;

const ChatBubble = styled.div`
  position: absolute;
  left: 619px;
  top: 1202px;
  display: flex;
  align-items: center;
  justify-content: center;
  width: 81px;
  height: 81px;
  padding-top: 5px;
  border-radius: 50%;
  background: #0a6ab0;
  box-shadow: 0 4px 18px rgba(0, 0, 0, 0.15);
`;

const ChatBadge = styled.span`
  position: absolute;
  top: -9px;
  right: -9px;
  width: 34px;
  height: 34px;
  border-radius: 50%;
  background: #ff0000;
  color: #fff;
  font-size: 18.400px;
  line-height: 34px;
  text-align: center;
`;
